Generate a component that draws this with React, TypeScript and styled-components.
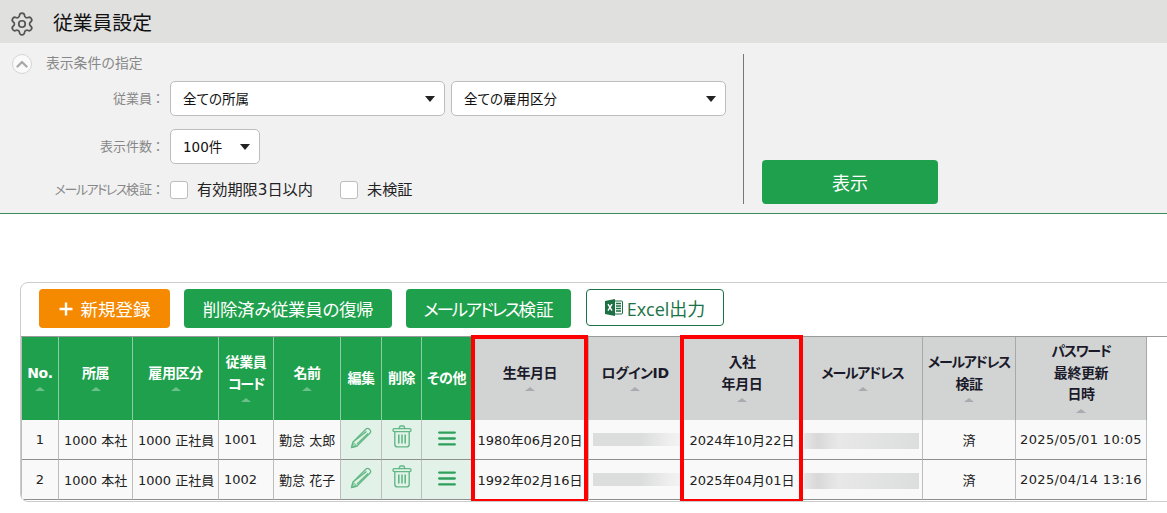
import React from "react";
import styled, { createGlobalStyle } from "styled-components";
import { Settings } from "lucide-react";

const Global = createGlobalStyle`
  html, body { margin: 0; padding: 0; background: #fff; }
  body { font-family: "DejaVu Sans", "Noto Sans CJK JP", sans-serif; font-size: 13px; color: #222; overflow: hidden; }
  * { box-sizing: border-box; }
`;

const Page = styled.div`width: 1167px; height: 513px; overflow: hidden;`;

const TitleBar = styled.header`
  height: 43px; background: #e0e0de; display: flex; align-items: center; padding: 5px 0 0 9px; gap: 18px; color: #111;
  svg { color: #555; }
`;
const Title = styled.h1`margin: 0; font-size: 19.8px; font-weight: 400; line-height: 1;`;

const Panel = styled.section`
  height: 171px; background: #f1f1f1; border-bottom: 1px solid #3b8a5c; display: flex; padding: 11px 0 9px;
`;
const PanelForm = styled.div`
  width: 744px; border-right: 1px solid #777; height: 150px; position: relative; padding-left: 12px;
`;
const Legend = styled.div`display: flex; align-items: center; gap: 14px; height: 19px; color: #888; font-size: 13.8px; margin-bottom: 8px;`;
const LegendText = styled.span`margin-top: -3px;`;
const Collapse = styled.span`
  width: 20px; height: 20px; border-radius: 50%; background: #fafafa; border: 1px solid #d4d4d4; display: flex; align-items: center; justify-content: center;
`;
const FormRow = styled.div<{ $mb: number }>`
  display: flex; align-items: center; margin-left: -12px; margin-bottom: ${p => p.$mb}px; gap: 6px;
`;
const Label = styled.label`
  width: 164px; display: flex; justify-content: flex-end; align-items: center; color: #888; font-size: 13px; flex: none;
  white-space: nowrap; font-feature-settings: "palt"; padding-bottom: 2px;
`;
const Colon = styled.span`width: 12px; text-align: center; font-family: "Noto Sans CJK JP", sans-serif;`;
const Kana = styled.span<{ $ls: number }>`letter-spacing: ${p => p.$ls}px;`;
const Select = styled.div<{ $w: number }>`
  width: ${p => p.$w}px; height: 35px; background: #fff; border: 1px solid #bdbdbd; border-radius: 5px; display: flex; align-items: center;
  justify-content: space-between; padding: 0 9px 2px 12px; font-size: 13.5px; color: #111; flex: none; font-feature-settings: "palt";
`;
const Caret = styled.i`
  width: 0; height: 0; margin-top: 2px; border-left: 5px solid transparent; border-right: 5px solid transparent; border-top: 6.5px solid #222;
`;
const Check = styled.input.attrs({ type: "checkbox" })`
  appearance: none; width: 18px; height: 18px; background: #fff; border: 1px solid #bdbdbd; border-radius: 3px; margin: 0 9px 0 0; flex: none;
`;
const CheckLabel = styled.label`
  display: flex; align-items: center; font-size: 15.2px; color: #222; margin-right: 21px; white-space: nowrap; line-height: 18px;
`;
const PanelAction = styled.div`flex: 1; display: flex; align-items: flex-end; padding-left: 18px;`;
const ShowButton = styled.button`
  width: 176px; height: 44px; background: #1fa04c; color: #fff; border: 0; border-radius: 4px; font: inherit; font-size: 18px; padding: 0 0 1px;
`;

const Card = styled.section`
  margin: 68px -10px 0 20px; height: 220px; border: 1px solid #ccc; border-radius: 8px; overflow: hidden; background: #fff;
`;
const Toolbar = styled.div`display: flex; gap: 14px; padding: 6px 0 0 18px; height: 53px;`;
const ActionButton = styled.button<{ $bg: string; $w: number }>`
  width: ${p => p.$w}px; height: 39px; background: ${p => p.$bg}; color: #fff; border: 0; border-radius: 4px; font: inherit; font-size: 17.5px;
  display: flex; align-items: center; justify-content: center; gap: 8px; padding: 0; white-space: nowrap; font-feature-settings: "palt";
`;
const ExcelButton = styled.button`
  width: 138px; height: 37px; margin-left: 1px; background: #fff; color: #1a7346; border: 1px solid #1a7346; border-radius: 4px; font: inherit;
  font-size: 18px; display: flex; align-items: center; justify-content: center; gap: 4px; padding: 0; font-family: "Open Sans", "Noto Sans CJK JP", sans-serif;
`;
const TableWrap = styled.div`position: relative; border-top: 1px solid #9a9a9a; height: 166px;`;
const Table = styled.table`
  width: 1125px; table-layout: fixed; border-collapse: separate; border-spacing: 0; border-left: 1px solid #bbb;
`;
const HeadCell = styled.th<{ $green?: boolean }>`
  height: 83px; padding: 0; font-size: 14px; font-weight: 700; line-height: 21.5px; text-align: center; vertical-align: middle;
  font-feature-settings: "palt"; letter-spacing: -0.4px;
  background: ${p => (p.$green ? "#1fa04c" : "#d2d4d4")}; color: ${p => (p.$green ? "#fff" : "#1a1a2a")};
  border-right: 1px solid ${p => (p.$green ? "#8ccba3" : "#a8a8a8")};
`;
const HeadLine = styled.div<{ $tight: boolean }>`
  ${p => (p.$tight ? "letter-spacing: -1.3px;" : "")}
`;
const SortMark = styled.i<{ $green?: boolean }>`
  display: block; width: 0; height: 0; margin: 3px auto 3px; border-left: 5px solid transparent; border-right: 5px solid transparent;
  border-bottom: 4px solid ${p => (p.$green ? "#6cc08a" : "#a9abb0")};
`;
const Cell = styled.td<{ $center?: boolean; $action?: boolean; $wide?: boolean }>`
  height: 40px; padding: 0 0 0 5px; font-size: 13px; white-space: nowrap; overflow: hidden;
  text-align: ${p => (p.$center || p.$action ? "center" : "left")};
  background: ${p => (p.$action ? "#e3f2e8" : "#f9f9f9")};
  border-right: 1px solid #bdbdbd; border-bottom: 1px solid #8f8f8f;
  ${p => (p.$center || p.$action ? "padding: 0;" : "")}
  ${p => (p.$wide ? "letter-spacing: 0.33px;" : "")}
  svg { display: block; margin: 0 auto 3px; }
`;
const TrashCell = styled(Cell)`svg { margin-bottom: 6px; }`;
const Blur = styled.div<{ $w: number; $h: number }>`
  width: ${p => p.$w}px; height: ${p => p.$h}px; margin: -1px 0 0 -1px; filter: blur(0.6px);
  background: linear-gradient(90deg, #dcdddd 0%, #dcdddd 55%, #eeeeee 85%, #f3f3f3 100%);
`;
const BlurMail = styled(Blur)`
  margin: 3px 0 0 -4px; background: linear-gradient(90deg, #e6e6e6 0%, #d8d8d8 12%, #e8e8e8 30%, #dcdddd 100%);
`;
const Highlight = styled.div<{ $left: number; $w: number }>`
  position: absolute; left: ${p => p.$left}px; top: -2px; width: ${p => p.$w}px; height: 168px; border: 4px solid #f00; pointer-events: none;
`;

const Chevron = () => (
  <svg width="12" height="8" viewBox="0 0 12 8"><path d="M1.5 6.5 6 2l4.5 4.5" fill="none" stroke="#aaa" strokeWidth="2.4" strokeLinecap="round" strokeLinejoin="round" /></svg>
);
const PencilIcon = () => (
  <svg width="22" height="22" viewBox="0 0 22 22" fill="none" stroke="#62b885" strokeWidth="1.3" strokeLinejoin="round">
    <path d="M1.5 20.5 3 15 15.8 2.2c1-1 2.6-1 3.6 0l.4.4c1 1 1 2.6 0 3.6L7 19z" />
    <path d="M4.2 14 16.5 4.6M7 17 18 6.5" />
    <path d="M1.5 20.5 3 15l4 4z" fill="#62b885" opacity=".55" />
  </svg>
);
const TrashIcon = () => (
  <svg width="20" height="23" viewBox="0 0 20 23" fill="none" stroke="#62b885" strokeWidth="1.4" strokeLinejoin="round" strokeLinecap="round">
    <path d="M7.5 3.5V2.4c0-.8.6-1.4 1.4-1.4h2.2c.8 0 1.4.6 1.4 1.4v1.1" />
    <rect x="1" y="3.6" width="18" height="3" rx="1.4" />
    <path d="M2.8 6.8v12.4c0 1.5 1.2 2.7 2.7 2.7h9c1.5 0 2.7-1.2 2.7-2.7V6.8" />
    <path d="M6.8 9.5v9M10 9.5v9M13.2 9.5v9" strokeWidth="1.6" strokeLinecap="butt" />
  </svg>
);
const MenuIcon = () => (
  <svg width="18" height="15" viewBox="0 0 18 15" fill="none" stroke="#2f9f5c" strokeWidth="2.3" strokeLinecap="round">
    <path d="M1.2 1.6h15.6M1.2 7.5h15.6M1.2 13.4h15.6" />
  </svg>
);
const ExcelIcon = () => (
  <svg width="18" height="17" viewBox="0 0 18 17">
    <path d="M7 2h10a1 1 0 0 1 .5.5v12l-.5.5H7z" fill="#fff" stroke="#1d7044" strokeWidth="1" />
    <path d="M11 4.5h5M11 7h5M11 9.5h5M11 12h5" stroke="#1d7044" strokeWidth="1.3" />
    <path d="M0 2 10 0v17L0 15z" fill="#1d7044" />
    <path d="M3 5.2 7 11.6M7 5.2 3 11.6" stroke="#fff" strokeWidth="1.5" />
  </svg>
);
const PlusIcon = () => (
  <svg width="14" height="14" viewBox="0 0 14 14"><path d="M7 .5v13M.5 7h13" stroke="#fff" strokeWidth="2.4" /></svg>
);

type Col = { w: number; lines: string[]; green?: boolean; sort?: boolean };
const cols: Col[] = [
  { w: 37, lines: ["No."], green: true, sort: true },
  { w: 74, lines: ["所属"], green: true, sort: true },
  { w: 86, lines: ["雇用区分"], green: true, sort: true },
  { w: 55, lines: ["従業員", "コード"], green: true, sort: true },
  { w: 67, lines: ["名前"], green: true, sort: true },
  { w: 41, lines: ["編集"], green: true },
  { w: 40, lines: ["削除"], green: true },
  { w: 50, lines: ["その他"], green: true },
  { w: 117, lines: ["生年月日"], sort: true },
  { w: 93, lines: ["ログインID"], sort: true },
  { w: 121, lines: ["入社", "年月日"], sort: true },
  { w: 120, lines: ["メールアドレス"], sort: true },
  { w: 93, lines: ["メールアドレス", "検証"], sort: true },
  { w: 131, lines: ["パスワード", "最終更新", "日時"], sort: true },
];
const tightLines = ["コード", "メールアドレス", "パスワード"];

const rows = [
  { no: "1", org: "1000 本社", type: "1000 正社員", code: "1001", name: "勤怠 太郎", birth: "1980年06月20日", join: "2024年10月22日", pw: "2025/05/01 10:05" },
  { no: "2", org: "1000 本社", type: "1000 正社員", code: "1002", name: "勤怠 花子", birth: "1992年02月16日", join: "2025年04月01日", pw: "2025/04/14 13:16" },
];

export default function App() {
  return (
    <Page>
      <Global />
      <TitleBar>
        <Settings size={26} strokeWidth={1.6} />
        <Title>従業員設定</Title>
      </TitleBar>
      <Panel>
        <PanelForm>
          <Legend><Collapse><Chevron /></Collapse><LegendText>表示条件の指定</LegendText></Legend>
          <FormRow $mb={13}>
            <Label>従業員<Colon>：</Colon></Label>
            <Select $w={275}>全ての所属<Caret /></Select>
            <Select $w={275}>全ての雇用区分<Caret /></Select>
          </FormRow>
          <FormRow $mb={15}>
            <Label>表示件数<Colon>：</Colon></Label>
            <Select $w={90}>100件<Caret /></Select>
          </FormRow>
          <FormRow $mb={0}>
            <Label><Kana $ls={-1.5}>メールアドレス</Kana>検証<Colon>：</Colon></Label>
            <CheckLabel><Check />有効期限3日以内</CheckLabel>
            <CheckLabel><Check />未検証</CheckLabel>
          </FormRow>
        </PanelForm>
        <PanelAction><ShowButton>表示</ShowButton></PanelAction>
      </Panel>
      <Card>
        <Toolbar>
          <ActionButton $bg="#f58a00" $w={131}><PlusIcon />新規登録</ActionButton>
          <ActionButton $bg="#1fa04c" $w={208}><Kana $ls={-0.35}>削除済み従業員の復帰</Kana></ActionButton>
          <ActionButton $bg="#1fa04c" $w={165}><span><Kana $ls={-2.2}>メールアドレス</Kana>検証</span></ActionButton>
          <ExcelButton><ExcelIcon />Excel出力</ExcelButton>
        </Toolbar>
        <TableWrap>
          <Table>
            <colgroup>{cols.map((c, i) => <col key={i} width={c.w} />)}</colgroup>
            <thead>
              <tr>
                {cols.map((c, i) => (
                  <HeadCell key={i} $green={c.green}>
                    {c.lines.map((l, j) => <HeadLine key={j} $tight={tightLines.includes(l)}>{l}</HeadLine>)}
                    {c.sort && <SortMark $green={c.green} />}
                  </HeadCell>
                ))}
              </tr>
            </thead>
            <tbody>
              {rows.map(r => (
                <tr key={r.no}>
                  <Cell $center>{r.no}</Cell>
                  <Cell>{r.org}</Cell>
                  <Cell>{r.type}</Cell>
                  <Cell>{r.code}</Cell>
                  <Cell>{r.name}</Cell>
                  <Cell $action><PencilIcon /></Cell>
                  <TrashCell $action><TrashIcon /></TrashCell>
                  <Cell $action><MenuIcon /></Cell>
                  <Cell $center>{r.birth}</Cell>
                  <Cell><Blur $w={89} $h={13} /></Cell>
                  <Cell $center>{r.join}</Cell>
                  <Cell><BlurMail $w={115} $h={16} /></Cell>
                  <Cell $center>済</Cell>
                  <Cell $center $wide>{r.pw}</Cell>
                </tr>
              ))}
            </tbody>
          </Table>
          <Highlight $left={450} $w={117} />
          <Highlight $left={659} $w={123} />
        </TableWrap>
      </Card>
    </Page>
  );
}
